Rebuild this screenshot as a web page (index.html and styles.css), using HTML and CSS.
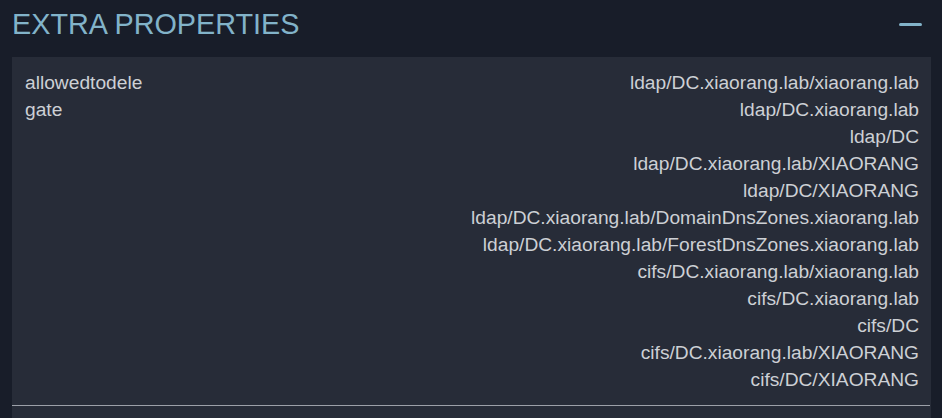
FILE: index.html
```html
<!DOCTYPE html>
<html>
<head>
<meta charset="utf-8">
<link rel="stylesheet" href="styles.css">
</head>
<body>
<div class="page">
  <div class="header">
    <div class="title">EXTRA PROPERTIES</div>
    <div class="collapse"></div>
  </div>
  <div class="panel">
    <div class="table">
      <div class="key">allowedtodelegate</div>
      <div class="values">
        <div>ldap/DC.xiaorang.lab/xiaorang.lab</div>
        <div>ldap/DC.xiaorang.lab</div>
        <div>ldap/DC</div>
        <div>ldap/DC.xiaorang.lab/XIAORANG</div>
        <div>ldap/DC/XIAORANG</div>
        <div>ldap/DC.xiaorang.lab/DomainDnsZones.xiaorang.lab</div>
        <div>ldap/DC.xiaorang.lab/ForestDnsZones.xiaorang.lab</div>
        <div>cifs/DC.xiaorang.lab/xiaorang.lab</div>
        <div>cifs/DC.xiaorang.lab</div>
        <div>cifs/DC</div>
        <div>cifs/DC.xiaorang.lab/XIAORANG</div>
        <div>cifs/DC/XIAORANG</div>
      </div>
    </div>
    <div class="divider"></div>
  </div>
</div>
</body>
</html>
```
FILE: styles.css
```css
html, body {
  margin: 0;
  padding: 0;
  background: #181d29;
  height: 100%;
  overflow: hidden;
}
.page {
  padding: 0 11px 0 12px;
  font-family: "Liberation Sans", Arial, sans-serif;
}
.header {
  height: 57px;
  display: flex;
  align-items: center;
  justify-content: space-between;
  padding-bottom: 8px;
  box-sizing: border-box;
}
.title {
  font-size: 28.8px;
  color: #82b3c9;
  line-height: 1;
}
.collapse {
  width: 23px;
  height: 3px;
  border-radius: 2px;
  background: #82b3c9;
  margin-right: 9px;
}
.panel {
  background: #272c38;
  padding-top: 12px;
  height: 361px;
  box-sizing: border-box;
}
.table {
  display: flex;
  justify-content: space-between;
  padding: 0 12px 0 13px;
  font-size: 19.2px;
  line-height: 27px;
  color: #cdd0d5;
}
.key {
  width: 124px;
  word-break: break-all;
}
.values {
  text-align: right;
}
.divider {
  margin-top: 12px;
  height: 1px;
  background: #9ca0a8;
  margin-right: 1px;
}
```
